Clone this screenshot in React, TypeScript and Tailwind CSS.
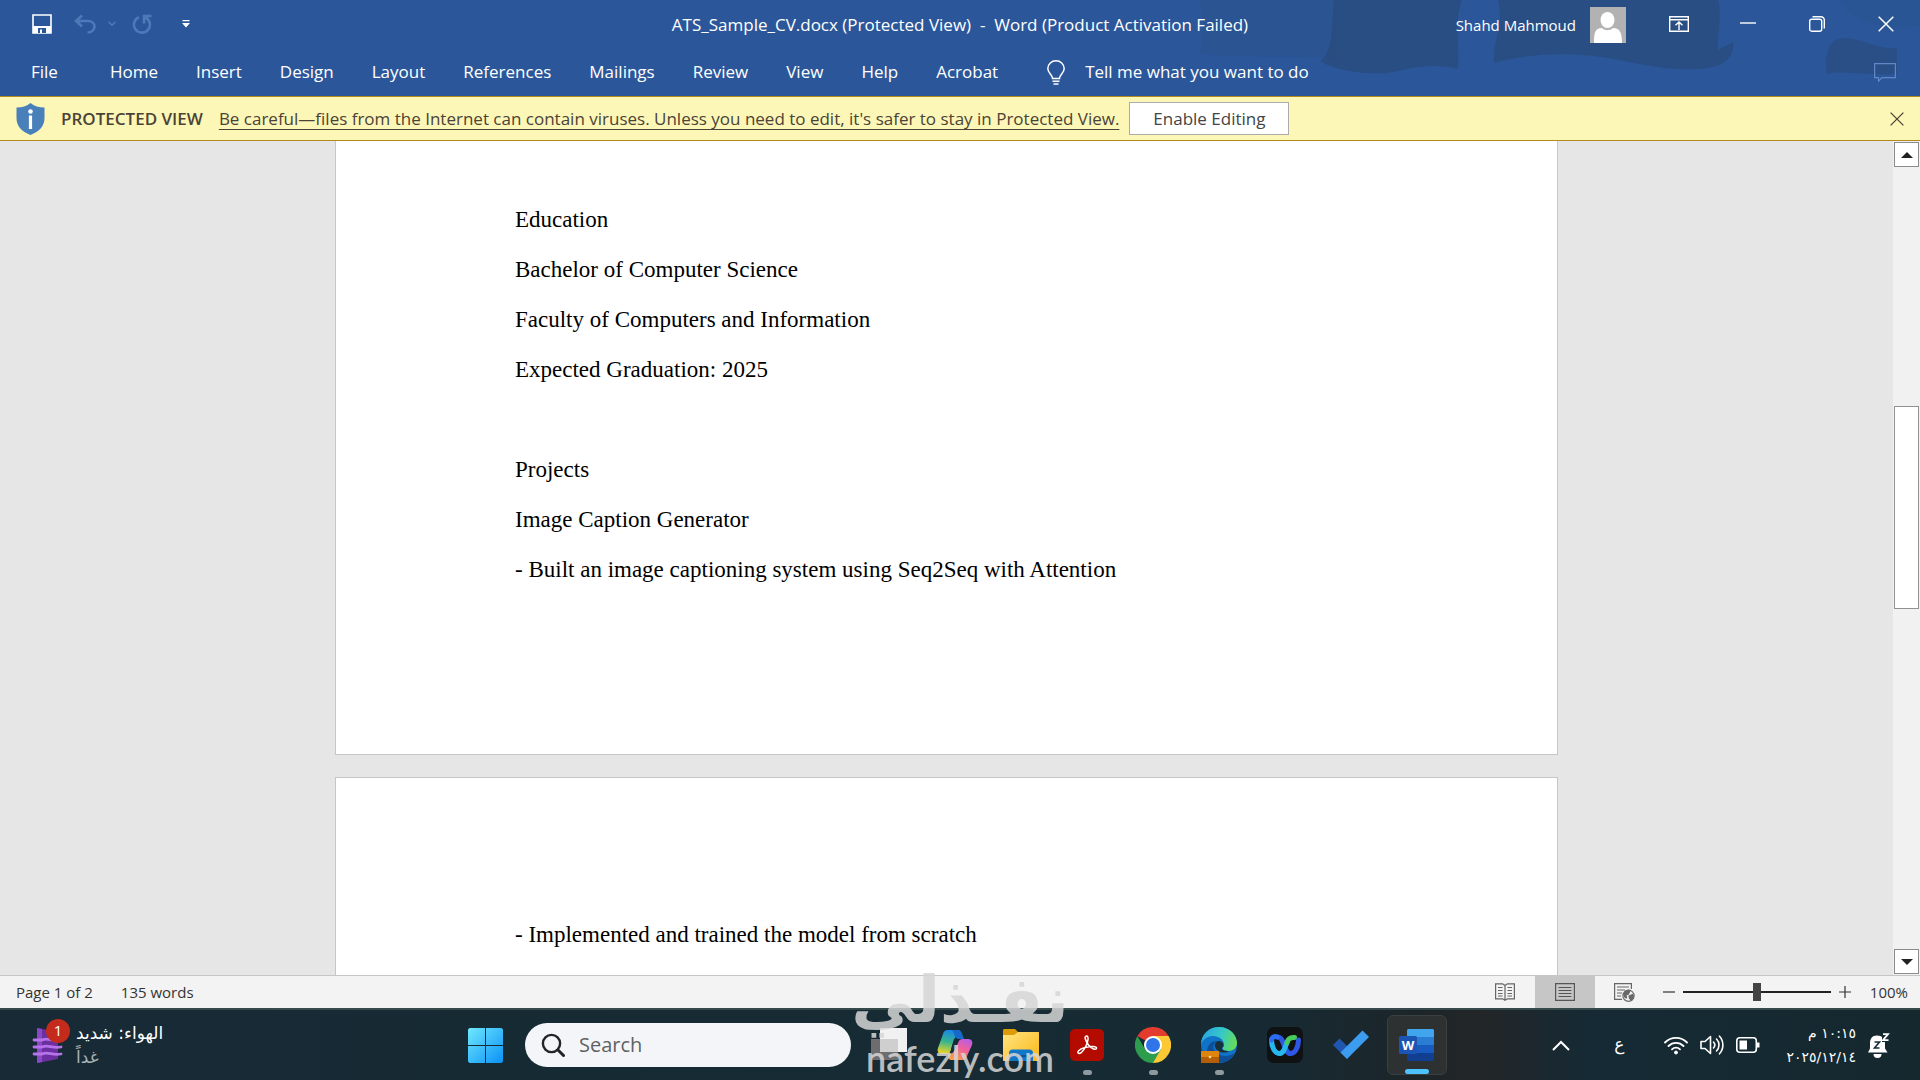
import { useState } from 'react';
import type { ReactNode } from 'react';

interface IconProps {
  className?: string;
}

const tabs = ['Home', 'Insert', 'Design', 'Layout', 'References', 'Mailings', 'Review', 'View', 'Help', 'Acrobat'];

const firstPage = [
  'Education',
  'Bachelor of Computer Science',
  'Faculty of Computers and Information',
  'Expected Graduation: 2025',
  '',
  'Projects',
  'Image Caption Generator',
  '- Built an image captioning system using Seq2Seq with Attention',
];

const secondPage = ['- Implemented and trained the model from scratch'];

/* ---------- title bar icons ---------- */

const SaveIcon = () => (
  <svg width="20" height="20" viewBox="0 0 20 20" fill="none">
    <path d="M1 1h18v18H1z" stroke="#fff" strokeWidth="1.6" />
    <path d="M1 12h18v7H1z" fill="#fff" />
    <path d="M6 14h8v5H6z" fill="#2b579a" />
    <path d="M8 15.500h2V19H8z" fill="#fff" />
  </svg>
);

const UndoIcon = () => (
  <svg width="22" height="20" viewBox="0 0 22 20" fill="none" stroke="#4f78b8" strokeWidth="2.600">
    <path d="M8 1.500 2 7l6 5.500M2.500 7H14c4 0 6.500 2.500 6.500 5.500S18 18.500 13.500 18.500" />
  </svg>
);

const RedoIcon = () => (
  <svg width="20" height="20" viewBox="0 0 20 20" fill="none" stroke="#4f78b8" strokeWidth="2.600">
    <path d="M7 3.200A8 8 0 1 0 13.500 3.500M12 9.500V2h7.500" />
  </svg>
);

const Chevron = ({ className }: IconProps) => (
  <svg className={className} width="8" height="6" viewBox="0 0 8 6" fill="none" stroke="#4f78b8" strokeWidth="1.600">
    <path d="m.700.800 3.300 3.500L7.300.800" />
  </svg>
);

const CustomizeIcon = () => (
  <svg width="8" height="8" viewBox="0 0 8 8" fill="#fff">
    <path d="M.500 0h7v1.200h-7zM0 3h8L4 7.500z" />
  </svg>
);

const RibbonIcon = () => (
  <svg width="20" height="16" viewBox="0 0 20 16" fill="none" stroke="#fff" strokeWidth="1.400">
    <path d="M.700.700h18.600v14.600H.700zM.700 3.700h18.600M10 14V6M6.500 9.300 10 6l3.500 3.300" />
  </svg>
);

const MinimizeIcon = () => (
  <svg width="16" height="16" viewBox="0 0 16 16" stroke="#fff" strokeWidth="1.400">
    <path d="M0 7h16" />
  </svg>
);

const RestoreIcon = () => (
  <svg width="16" height="16" viewBox="0 0 16 16" fill="none" stroke="#fff" strokeWidth="1.400">
    <rect x=".7" y="3.200" width="12" height="12" rx="2" />
    <path d="M3.500.800H12a3.300 3.300 0 0 1 3.300 3.300V12.500" />
  </svg>
);

const CloseIcon = ({ className }: IconProps) => (
  <svg className={className} width="16" height="16" viewBox="0 0 16 16" fill="none" stroke="currentColor" strokeWidth="1.500">
    <path d="m.700.700 14.600 14.600M15.300.700.700 15.300" />
  </svg>
);

const CommentIcon = () => (
  <svg width="22" height="19" viewBox="0 0 22 19" fill="none" stroke="#6188c6" strokeWidth="1.200">
    <path d="M.600.600h20.800v14H8l-3.500 3.600v-3.600H.600z" />
  </svg>
);

const BulbIcon = () => (
  <svg width="18" height="25" viewBox="0 0 18 25" fill="none" stroke="#fff" strokeWidth="1.500">
    <path d="M5.500 18.500c0-4-4.700-5.200-4.700-10A8.200 8 0 0 1 9 .800a8.200 8 0 0 1 8.200 7.700c0 4.800-4.700 6-4.700 10zM5.500 21.200h7M6.500 24h5" />
  </svg>
);

const Avatar = () => (
  <svg className="h-9 w-9" viewBox="0 0 36 36">
    <path d="M0 0h36v36H0z" fill="#b2b2b2" />
    <ellipse cx="17.500" cy="13" rx="7" ry="8" fill="#fff" />
    <path d="M4 36c0-10 1-15 8-15 3 3 8 3 11 0 7 0 9 5 9 15z" fill="#fff" />
  </svg>
);

const HeaderClouds = () => (
  <svg className="pointer-events-none absolute right-0 top-0 h-24 w-[720px]" viewBox="0 0 720 96" fill="#294a7b">
    <path d="M0 0h137v58c-40-2-90 0-137-4 3-20 4-36 0-54z" opacity=".25" />
    <path d="M134 0h128c-8 20-2 48-4 69-20-6-44-2-60 2-20 5-60 2-78-10 14-8 12-40 14-61z" opacity=".7" />
    <path d="M298 0h220c4 12 0 30 0 50l15-8c2 16-10 26-34 27-30 2-54-4-80-9-40-8-86-8-125 3-2-18 10-40 4-63z" opacity=".7" />
    <path d="M627 74c-4-22 4-36 16-36 18 0 36 12 54 10v26c-30 2-54-4-70 0z" opacity=".6" />
    <path d="M640 0h80v26c-30 4-70 0-80-26z" opacity=".15" />
  </svg>
);

const ShieldIcon = () => (
  <svg width="29" height="32" viewBox="0 0 29 32">
    <path d="M14.500 0C18 3 23 4.500 28.500 4.500V15c0 8-5 13.500-14 17C5.500 28.500.500 23 .500 15V4.500C6 4.500 11 3 14.500 0z" fill="#4a80ba" />
    <circle cx="14.500" cy="8.500" r="2.300" fill="#fff" />
    <path d="M12.900 12.500h3.200V26h-3.200z" fill="#fff" />
  </svg>
);

/* ---------- status bar icons ---------- */

const ReadModeIcon = () => (
  <svg width="20" height="18" viewBox="0 0 20 18" fill="none" stroke="#666" strokeWidth="1.200">
    <path d="M.600.800h7L10 2.500 12.400.800h7v15h-7L10 17.300 7.600 15.800h-7zM10 2.500v15M3 4.500h4.500M3 7.500h4.500M3 10.500h4.500M3 13h4.500M12.500 4.500H17M12.500 7.500H17M12.500 10.500H17M12.500 13H17" />
  </svg>
);

const PrintLayoutIcon = () => (
  <svg width="20" height="18" viewBox="0 0 20 18" fill="none" stroke="#555" strokeWidth="1.200">
    <path d="M.600.600h18.800v16.800H.600zM3.500 4.500h13M3.500 7.500h13M3.500 10.500h13M3.500 13.500h13" />
  </svg>
);

const WebLayoutIcon = () => (
  <svg width="21" height="19" viewBox="0 0 21 19" fill="none" stroke="#666" strokeWidth="1.200">
    <path d="M8 16.400H.600V.600h16.800V6M3 4h12M3 7h8M3 10h5M3 13h4" />
    <circle cx="14.500" cy="12.800" r="5.600" fill="#f3f3f3" stroke="#6b6b6b" />
    <path d="M10 10c1.500-2.500 4.500-3 6-2.500l-1.500 3.500-2.500 1 .500 3c-2 0-3-3-2.500-5zM15 13l3.500-1.500 1 2-2 3.500-2-1.500z" fill="#6b6b6b" />
  </svg>
);

/* ---------- taskbar icons ---------- */

const AirQualityIcon = () => (
  <svg width="32" height="37" viewBox="0 0 32 37" fill="none">
    <path d="M6 1l9 2 11 9v20L6 36z" fill="#6b2fa0" />
    <path d="M5 1l5 1v33l-5 1z" fill="#8a48c8" />
    <path d="M2 13h8c6-3 10 2 19 0M2 20h8c6-3 10 2 19 0M2 27h8c6-3 10 2 19 0" stroke="#b673ea" strokeWidth="2.800" strokeLinecap="round" />
  </svg>
);

const WindowsIcon = () => (
  <svg width="35" height="35" viewBox="0 0 35 35">
    <defs>
      <linearGradient id="win" x1="0" y1="0" x2="35" y2="35" gradientUnits="userSpaceOnUse">
        <stop stopColor="#6fe8ff" />
        <stop offset="1" stopColor="#0a91f5" />
      </linearGradient>
    </defs>
    <path d="M1.500 0H17v17H0V1.500zM18 0h15.500L35 1.500V17H18zM0 18h17v17H1.500L0 33.500zM18 18h17v15.500L33.500 35H18z" fill="url(#win)" />
  </svg>
);

const SearchIcon = () => (
  <svg width="24" height="24" viewBox="0 0 24 24" fill="none" stroke="#242427" strokeWidth="2.400" strokeLinecap="round">
    <circle cx="10.500" cy="10.500" r="8.600" />
    <path d="m17 17 5.500 5.500" strokeWidth="3" />
  </svg>
);

const TaskViewIcon = () => (
  <svg width="36" height="36" viewBox="0 0 36 36">
    <path d="M0 12h27v21H0z" fill="#6d6c6f" />
    <path d="M9 1h27v24H9z" fill="#f1f1f1" />
    <path d="M9 12h18v13H9z" fill="#cfcfcf" />
  </svg>
);

const CopilotIcon = () => (
  <svg width="36" height="36" viewBox="0 0 36 36" fill="none">
    <defs>
      <linearGradient id="copA" x1="12" y1="3" x2="8" y2="26" gradientUnits="userSpaceOnUse">
        <stop stopColor="#1a86e8" />
        <stop offset=".5" stopColor="#35b48f" />
        <stop offset="1" stopColor="#e6d42c" />
      </linearGradient>
      <linearGradient id="copB" x1="28" y1="9" x2="18" y2="33" gradientUnits="userSpaceOnUse">
        <stop stopColor="#b05cf0" />
        <stop offset=".5" stopColor="#f0609c" />
        <stop offset="1" stopColor="#f5a04c" />
      </linearGradient>
    </defs>
    <path d="M11 3h12l-5 8c-1 2-2 5-3 8l-1 4c-1 3-2 4-5 4H5c-4 0-5-3-4-6L6 7c1-3 2-4 5-4z" fill="url(#copA)" />
    <path d="M14 3h7c3 0 4 3 5 6l1 3h-5c-3 0-4-2-5-5s-1-4-3-4z" fill="#1769c9" />
    <path d="M25 33H15c-3 0-4-2-4-6 4 0 6-2 7-5l3-6c1-3 2-4 5-4h5c4 0 5 3 4 6l-5 11c-1 3-2 4-5 4z" fill="url(#copB)" />
    <path d="m20 11-4 14-3 1 4-14z" fill="#1a2d36" />
  </svg>
);

const ExplorerIcon = () => (
  <svg width="36" height="36" viewBox="0 0 36 36">
    <defs>
      <linearGradient id="fold" x1="4" y1="6" x2="30" y2="34" gradientUnits="userSpaceOnUse">
        <stop stopColor="#ffe27a" />
        <stop offset="1" stopColor="#fbbb20" />
      </linearGradient>
    </defs>
    <path d="M0 3.500C0 2.600.600 2 1.500 2H12l3 3h19.500c.900 0 1.500.600 1.500 1.500V12H0z" fill="#dd9b08" />
    <path d="M0 8h11l4-3h20c.600 0 1 .400 1 1v27c0 .600-.400 1-1 1H1c-.600 0-1-.400-1-1z" fill="url(#fold)" />
    <path d="M6 34v-8c0-2 1.500-3.500 3.500-3.500h17c2 0 3.500 1.500 3.500 3.500v8z" fill="#1277c9" />
    <path d="M12 28h12v2H12z" fill="#0a5596" />
  </svg>
);

const AcrobatIcon = () => (
  <svg width="36" height="36" viewBox="0 0 36 36" fill="none">
    <rect x="1" y="2" width="34" height="32" rx="5" fill="#b30b00" />
    <path
      d="M16.500 9.500c2-1.500 3.500 1 2 5.500-1.500 5-5.500 11.500-8.500 11.500-3-1 0-4.500 6-6 6-1.500 11.500-1.500 11.500.500 0 2.500-5 1-8-3-2.500-3.500-4-7.500-3-8.500z"
      stroke="#fff"
      strokeWidth="1.500"
    />
  </svg>
);

const ChromeIcon = () => (
  <svg width="36" height="36" viewBox="0 0 36 36">
    <path d="M18 18 2.400 9A18 18 0 0 1 33.600 9z" fill="#e33b2e" />
    <path d="M18 18V9h15.600A18 18 0 0 1 18 36z" fill="#fcc934" />
    <path d="M2.400 9 10.200 22.500 18 18l7.800 4.500L18 36A18 18 0 0 1 2.400 9z" fill="#2d9c4c" />
    <circle cx="18" cy="18" r="9" fill="#fff" />
    <circle cx="18" cy="18" r="7" fill="#2f74e8" />
  </svg>
);

const EdgeIcon = () => (
  <svg width="36" height="36" viewBox="0 0 36 36">
    <defs>
      <linearGradient id="edgeTop" x1="2" y1="8" x2="34" y2="20" gradientUnits="userSpaceOnUse">
        <stop stopColor="#2aa7e0" />
        <stop offset=".5" stopColor="#36c9c6" />
        <stop offset="1" stopColor="#68dc55" />
      </linearGradient>
    </defs>
    <circle cx="18" cy="18" r="18" fill="#1173c7" />
    <path d="M0 18C0 7 8 0 18 0c11 0 18 8 18 16 0 5-4 8-8.500 8-4 0-6-1.500-6-2.500 0-1 1.500-1.500 1.500-4C23 13 18 9 12 9 6 9 1 13 0 18z" fill="url(#edgeTop)" />
    <path d="M17 14c-3 1-5 4-4.500 7 .5 4 5 8 11.500 8 4 0 7-1 9.500-3-2 5-6.500 8.500-11.500 9.500H12C6 33 4 24 8 18c2-3 5-4.500 9-4z" fill="#0d4f98" />
    <path d="M17 14c4 0 5.500 2 5.500 4.500 0 1.500-1.500 2-1.500 3 0 1.500 3 3 7 2.500-3 2.500-9 2-12-1s-3-7 1-9z" fill="#17303c" />
    <path d="M0 24h18v12H0z" fill="#e08410" />
    <path d="M0 30h18v6H0z" fill="#b45f08" />
    <circle cx="9" cy="30" r="1.300" fill="#ffe08a" />
  </svg>
);

const WebexIcon = () => (
  <svg width="36" height="36" viewBox="0 0 36 36" fill="none" strokeLinecap="round">
    <rect width="36" height="36" rx="7" fill="#101113" />
    <path d="M31.500 13c0 7-3.500 13.500-7.500 13.500-5 0-6-6-8-11-1-3-3-5.500-5.500-5.500" stroke="#2f57e6" strokeWidth="5" />
    <path d="M4.500 13c0 7 3.500 13.500 7.500 13.500 5 0 6-6 8-11" stroke="#25b7ee" strokeWidth="5" />
    <path d="M4.500 13c.500-3 3-4 5.500-3" stroke="#2a6df0" strokeWidth="5" />
    <path d="M20 15.500c1-3.500 3-5.500 7.500-5" stroke="#47c95c" strokeWidth="5" />
  </svg>
);

const TodoIcon = () => (
  <svg width="36" height="36" viewBox="0 0 36 36">
    <path d="m0 18 6.500-6.500L19 24l-5 8z" fill="#1f57b0" />
    <path d="m7.500 25.500 22-22 6.500 6.500-22 22z" fill="#3c9cf0" />
  </svg>
);

const WordIcon = () => (
  <svg width="36" height="36" viewBox="0 0 36 36">
    <path d="M8 3.500C8 2.700 8.700 2 9.500 2h24c.800 0 1.500.700 1.500 1.500V10H8z" fill="#41a5ee" />
    <path d="M8 10h27v8H8z" fill="#2b7cd3" />
    <path d="M8 18h27v8H8z" fill="#185abd" />
    <path d="M8 26h27v6.500c0 .800-.700 1.500-1.500 1.500h-24C8.700 34 8 33.300 8 32.500z" fill="#103f91" />
    <rect y="9" width="18" height="18" rx="1.500" fill="#1a55b5" />
    <text x="9" y="22.500" textAnchor="middle" fontFamily="Open Sans, sans-serif" fontWeight="700" fontSize="13" fill="#fff">
      W
    </text>
  </svg>
);

const WifiIcon = () => (
  <svg width="24" height="20" viewBox="0 0 24 20" fill="none" stroke="#fff" strokeWidth="1.800" strokeLinecap="round">
    <path d="M1 7.500a15.500 15.500 0 0 1 22 0M4.500 11a10.600 10.600 0 0 1 15 0M8 14.300a5.700 5.700 0 0 1 8 0" />
    <circle cx="12" cy="17.500" r="1.500" fill="#fff" strokeWidth="1" />
  </svg>
);

const SpeakerIcon = () => (
  <svg width="24" height="20" viewBox="0 0 24 20" fill="none" stroke="#fff" strokeWidth="1.600" strokeLinecap="round" strokeLinejoin="round">
    <path d="M1 6.500h4l5.500-5v17l-5.500-5H1zM13.500 7a4.500 4.500 0 0 1 0 6M16.500 4a8.500 8.500 0 0 1 0 12M19.500 1.200c4.500 5 4.500 12.600 0 17.600" />
  </svg>
);

const BatteryIcon = () => (
  <svg width="24" height="16" viewBox="0 0 24 16" fill="none" stroke="#fff" strokeWidth="1.600">
    <rect x=".8" y=".8" width="19.500" height="14.400" rx="3" />
    <path d="M3.500 3.500H11v9H3.500z" fill="#fff" stroke="none" />
    <path d="M22 5.500v5" strokeWidth="3" />
  </svg>
);

const BellIcon = () => (
  <svg width="22" height="25" viewBox="0 0 22 25">
    <path d="M9 2.500c5 0 8 3.500 8 8v5l2.500 4H0l2-4v-5c0-4.500 2-8 7-8z" fill="#fff" />
    <path d="M5.500 21h8a4 4 0 0 1-8 0z" fill="#fff" />
    <path d="M6.500 9h5l-5 6h5" fill="none" stroke="#172b36" strokeWidth="1.600" />
    <path d="M14 0h8v9h-8z" fill="#172b36" />
    <path d="M15 1.200h5l-5 6h5.500" fill="none" stroke="#fff" strokeWidth="1.800" />
  </svg>
);

const taskbarApps: { name: string; icon: ReactNode; running?: boolean; active?: boolean }[] = [
  { name: 'Task View', icon: <TaskViewIcon /> },
  { name: 'Copilot', icon: <CopilotIcon /> },
  { name: 'File Explorer', icon: <ExplorerIcon /> },
  { name: 'Adobe Acrobat', icon: <AcrobatIcon />, running: true },
  { name: 'Google Chrome', icon: <ChromeIcon />, running: true },
  { name: 'Microsoft Edge', icon: <EdgeIcon />, running: true },
  { name: 'Webex', icon: <WebexIcon /> },
  { name: 'Microsoft To Do', icon: <TodoIcon /> },
  { name: 'Word', icon: <WordIcon />, active: true },
];

const windowButtons = [
  { name: 'Ribbon Display Options', icon: <RibbonIcon /> },
  { name: 'Minimize', icon: <MinimizeIcon /> },
  { name: 'Restore Down', icon: <RestoreIcon /> },
  { name: 'Close', icon: <CloseIcon /> },
];

function Header() {
  return (
    <header className="relative shrink-0 bg-[#2b579a] text-white">
      <HeaderClouds />
      <div className="relative grid h-12 grid-cols-[1fr_auto_1fr] items-center">
        <div className="flex items-center pl-8">
          <button aria-label="Save">
            <SaveIcon />
          </button>
          <button aria-label="Undo" className="ml-[22px] flex items-center gap-3">
            <UndoIcon />
            <Chevron />
          </button>
          <button aria-label="Redo" className="ml-4">
            <RedoIcon />
          </button>
          <button aria-label="Customize Quick Access Toolbar" className="ml-[30px]">
            <CustomizeIcon />
          </button>
        </div>
        <h1 className="whitespace-pre pt-[2px] text-[17px]">ATS_Sample_CV.docx (Protected View)  -  Word (Product Activation Failed)</h1>
        <div className="flex items-center justify-end">
          <button className="mr-[18px] flex items-center gap-[14px] pt-[2px] text-[15px]">
            Shahd Mahmoud
            <Avatar />
          </button>
          {windowButtons.map((button) => (
            <button key={button.name} aria-label={button.name} className="flex h-12 w-[69px] items-center justify-center">
              {button.icon}
            </button>
          ))}
        </div>
      </div>
      <nav className="relative flex h-12 items-center pl-3 pr-6 text-[17px]">
        <button className="mr-[14px] px-[19px]">File</button>
        {tabs.map((tab) => (
          <button key={tab} className="px-[19px]">
            {tab}
          </button>
        ))}
        <button className="ml-[30px] flex items-center gap-5">
          <BulbIcon />
          Tell me what you want to do
        </button>
        <button aria-label="Comments" className="ml-auto">
          <CommentIcon />
        </button>
      </nav>
    </header>
  );
}

function ProtectedViewBar({ onClose }: { onClose: () => void }) {
  return (
    <div className="flex h-[45px] shrink-0 items-center border-y border-[#b28a1e] bg-[#fcf7b6] px-4 text-[17px] text-[#4b4336]">
      <ShieldIcon />
      <span className="ml-4 font-semibold">PROTECTED VIEW</span>
      <a href="#protected-view" className="ml-4 underline underline-offset-4">
        Be careful—files from the Internet can contain viruses. Unless you need to edit, it&apos;s safer to stay in Protected View.
      </a>
      <button className="ml-[10px] h-[33px] w-40 border border-[#ababab] bg-white text-[#444]">Enable Editing</button>
      <button aria-label="Close message" className="ml-auto" onClick={onClose}>
        <CloseIcon className="h-[14px] w-[14px]" />
      </button>
    </div>
  );
}

function Scrollbar() {
  return (
    <div className="flex w-[27px] shrink-0 flex-col bg-[#f1f1f1] p-px">
      <button aria-label="Scroll up" className="flex h-[25px] items-center justify-center border border-[#8c8c8c] bg-white">
        <svg width="12" height="6" viewBox="0 0 12 6">
          <path d="M6 0l6 6H0z" fill="#222" />
        </svg>
      </button>
      <div className="flex flex-1 flex-col">
        <div className="flex-[240]" />
        <div className="flex-[201] border border-[#919191] bg-white" />
        <div className="flex-[341]" />
      </div>
      <button aria-label="Scroll down" className="flex h-[25px] items-center justify-center border border-[#8c8c8c] bg-white">
        <svg width="12" height="6" viewBox="0 0 12 6">
          <path d="M0 0h12L6 6z" fill="#222" />
        </svg>
      </button>
    </div>
  );
}

function DocumentArea() {
  return (
    <main className="flex min-h-0 flex-1 bg-[#e6e6e6] font-['Liberation_Serif',serif] text-[23px] leading-[50px] text-black">
      <div className="flex flex-1 flex-col items-center gap-[22px] overflow-hidden">
        <section className="w-full max-w-[1223px] shrink-0 border border-t-0 border-[#c6c6c6] bg-white px-[179px] pb-[159px] pt-[54px]">
          {firstPage.map((line, index) => (
            <p key={index} className="min-h-[50px]">
              {line}
            </p>
          ))}
        </section>
        <section className="w-full max-w-[1223px] shrink-0 border border-[#c6c6c6] bg-white px-[179px] pb-[159px] pt-[132px]">
          {secondPage.map((line, index) => (
            <p key={index}>{line}</p>
          ))}
        </section>
      </div>
      <Scrollbar />
    </main>
  );
}

function StatusBar() {
  const [zoom, setZoom] = useState(100);

  return (
    <div className="flex h-[33px] shrink-0 items-center border-t border-[#c6c6c6] bg-[#f3f3f3] pl-4 pr-3 text-[15px] text-[#333]">
      <span>Page 1 of 2</span>
      <span className="ml-7">135 words</span>
      <div className="ml-auto flex h-full">
        <button aria-label="Read Mode" className="flex w-[60px] items-center justify-center">
          <ReadModeIcon />
        </button>
        <button aria-label="Print Layout" className="flex w-[60px] items-center justify-center bg-[#c6c6c6]">
          <PrintLayoutIcon />
        </button>
        <button aria-label="Web Layout" className="flex w-[60px] items-center justify-center">
          <WebLayoutIcon />
        </button>
      </div>
      <button aria-label="Zoom out" className="ml-2" onClick={() => setZoom(zoom - 10)}>
        <svg width="12" height="12" viewBox="0 0 12 12" stroke="#333" strokeWidth="1.200">
          <path d="M0 6h12" />
        </svg>
      </button>
      <input
        type="range"
        aria-label="Zoom"
        min={0}
        max={200}
        value={zoom}
        onChange={(e) => setZoom(Number(e.target.value))}
        className="mx-2 h-[18px] w-[148px] appearance-none bg-transparent [&::-webkit-slider-runnable-track]:h-[2px] [&::-webkit-slider-runnable-track]:bg-[#222] [&::-webkit-slider-thumb]:-mt-2 [&::-webkit-slider-thumb]:h-[18px] [&::-webkit-slider-thumb]:w-2 [&::-webkit-slider-thumb]:appearance-none [&::-webkit-slider-thumb]:bg-[#444]"
      />
      <button aria-label="Zoom in" onClick={() => setZoom(zoom + 10)}>
        <svg width="12" height="12" viewBox="0 0 12 12" stroke="#333" strokeWidth="1.200">
          <path d="M0 6h12M6 0v12" />
        </svg>
      </button>
      <button className="ml-[19px]">{zoom}%</button>
    </div>
  );
}

function Taskbar() {
  return (
    <footer className="flex h-[72px] shrink-0 items-center border-t-2 border-[#364a4c] bg-[linear-gradient(90deg,#172a36_0%,#162b33_50%,#172a33_66%,#1c2529_74%,#232627_77%,#152a35_83%,#15282e_100%)] pl-8 pr-[30px] text-white">
      <button className="flex w-[424px] items-center gap-3 text-left">
        <span className="relative">
          <AirQualityIcon />
          <span className="absolute -top-2 left-[14px] flex h-6 w-6 items-center justify-center rounded-full bg-[#c42b1c] text-[15px]">1</span>
        </span>
        <span className="flex flex-col font-['DejaVu_Sans',sans-serif] text-[17px] leading-6">
          <span dir="rtl">الهواء: شديد</span>
          <span className="text-[#a9b5ba]">غداً</span>
        </span>
      </button>
      <div className="flex items-center">
        <button aria-label="Start" className="ml-3">
          <WindowsIcon />
        </button>
        <label className="ml-[22px] flex h-11 w-[326px] items-center rounded-full bg-[#f3f5f8] pl-4">
          <SearchIcon />
          <input
            type="text"
            aria-label="Search"
            placeholder="Search"
            className="ml-[14px] w-60 bg-transparent text-[20px] outline-none placeholder:text-[#5f6163]"
          />
        </label>
        <div className="ml-2 flex gap-[6px]">
          {taskbarApps.map((app) => (
            <button
              key={app.name}
              aria-label={app.name}
              className={`relative flex h-[60px] w-[60px] items-center justify-center rounded-md ${app.active ? 'border border-[#3b3f40] bg-[#2d3132]' : ''}`}
            >
              {app.icon}
              {app.running && <span className="absolute bottom-0 h-[5px] w-[9px] rounded-full bg-[#8f9a9e]" />}
              {app.active && <span className="absolute bottom-0 h-[5px] w-6 rounded-full bg-[#4cc2ff]" />}
            </button>
          ))}
        </div>
      </div>
      <div className="ml-auto flex items-center font-['DejaVu_Sans',sans-serif]">
        <button aria-label="Show hidden icons">
          <svg width="18" height="11" viewBox="0 0 18 11" fill="none" stroke="#fff" strokeWidth="2">
            <path d="m1 10 8-8 8 8" />
          </svg>
        </button>
        <button className="ml-11 text-[17px]">ع</button>
        <button aria-label="Network, volume and battery" className="ml-10 flex items-center gap-3">
          <WifiIcon />
          <SpeakerIcon />
          <BatteryIcon />
        </button>
        <button dir="rtl" className="ml-[26px] flex flex-col text-right text-[14px] leading-6">
          <span>١٠:١٥ م</span>
          <span>٢٠٢٥/١٢/١٤</span>
        </button>
        <button aria-label="Notifications" className="ml-3">
          <BellIcon />
        </button>
      </div>
    </footer>
  );
}

function Watermark() {
  return (
    <div className="pointer-events-none absolute bottom-0 left-[854px] flex w-[212px] flex-col items-center text-[#d6d6d6] opacity-85">
      <span dir="rtl" className="font-['DejaVu_Sans',sans-serif] text-[64px] font-bold leading-[72px]">
        نفـذلي
      </span>
      <span className="font-['Lato',sans-serif] text-[36px] font-semibold leading-[44px]">nafezly.com</span>
    </div>
  );
}

export default function App() {
  const [showBar, setShowBar] = useState(true);

  return (
    <div className="relative flex h-screen flex-col overflow-hidden font-['Open_Sans',sans-serif]">
      <Header />
      {showBar && <ProtectedViewBar onClose={() => setShowBar(false)} />}
      <DocumentArea />
      <StatusBar />
      <Taskbar />
      <Watermark />
    </div>
  );
}
